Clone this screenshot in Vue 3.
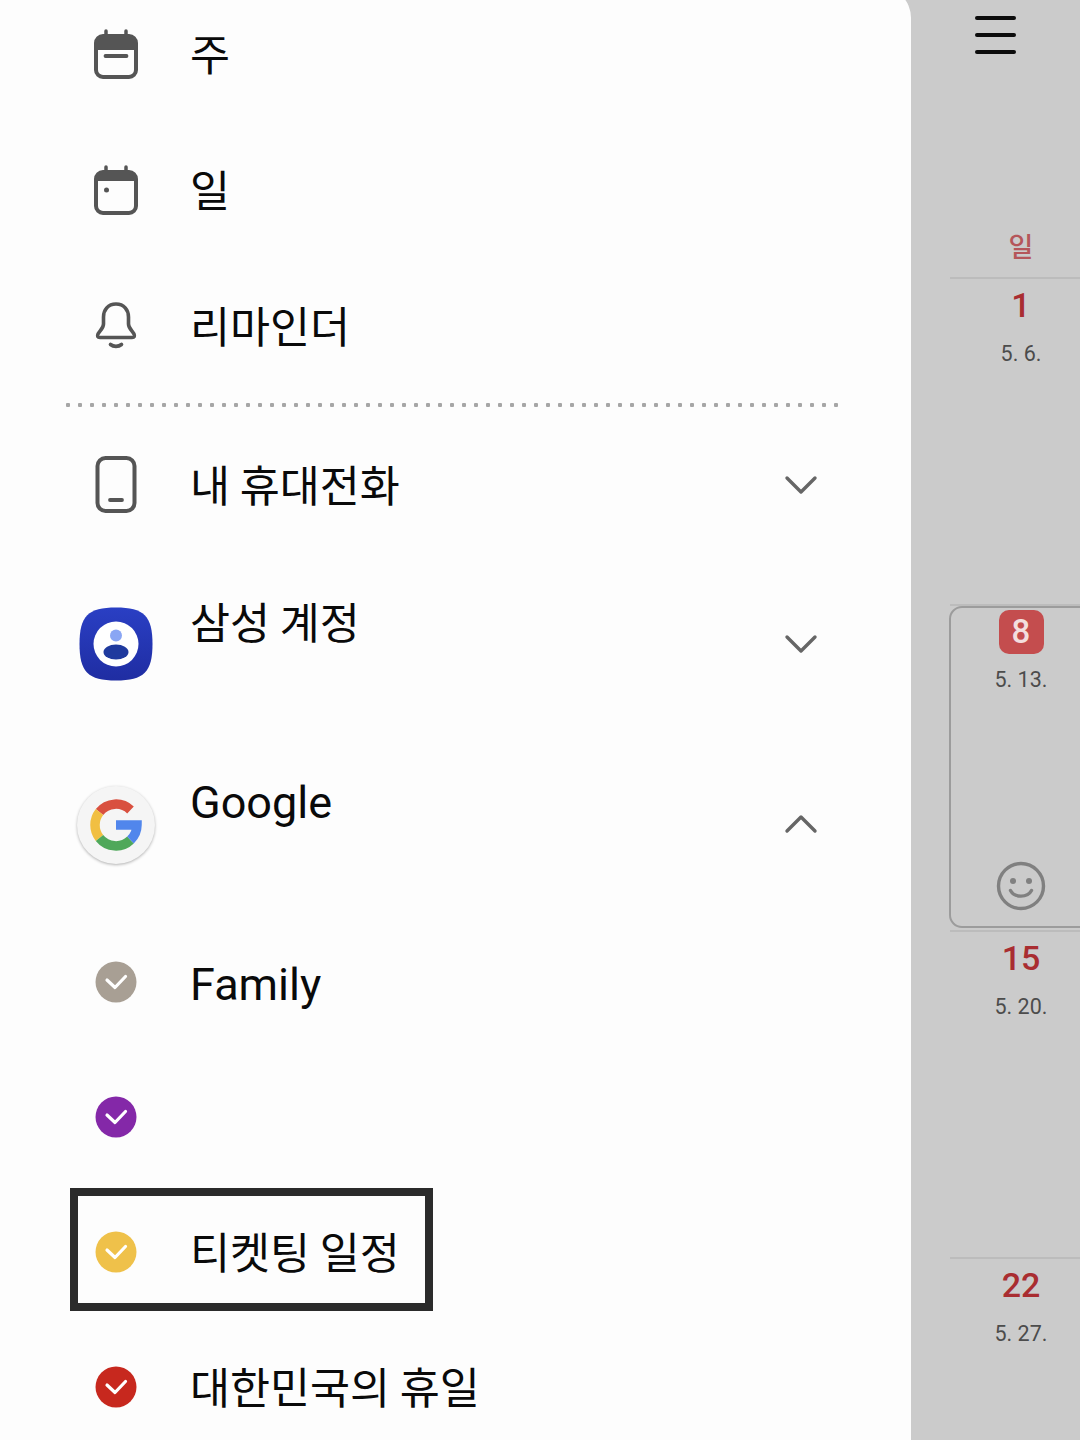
<script setup>
const checks = [
  { label: 'Family', color: '#a89f94', cls: 'family' },
  { label: '', color: '#8428a8' },
  { label: '티켓팅 일정', color: '#efc14a', boxed: true },
  { label: '대한민국의 휴일', color: '#c7281e' },
]

const weeks = [
  { day: '1', date: '5. 6.' },
  { day: '8', date: '5. 13.', today: true },
  { day: '15', date: '5. 20.' },
  { day: '22', date: '5. 27.' },
]
</script>

<template>
  <div class="screen">
    <aside class="drawer">
      <div class="row">
        <svg class="icon" width="48" height="50" viewBox="0 0 48 50">
          <path d="M14 2v8M34 2v8" stroke="#555" stroke-width="3.5" stroke-linecap="round" />
          <path d="M4 12a6 6 0 0 1 6-6h28a6 6 0 0 1 6 6v9H4z" fill="#555" />
          <rect x="4" y="7" width="40" height="41" rx="7" fill="none" stroke="#555" stroke-width="4" />
          <path d="M13.5 27h21" stroke="#555" stroke-width="3.8" stroke-linecap="round" />
        </svg>
        <span class="label">주</span>
      </div>
      <div class="row">
        <svg class="icon" width="48" height="50" viewBox="0 0 48 50">
          <path d="M14 2v8M34 2v8" stroke="#555" stroke-width="3.5" stroke-linecap="round" />
          <path d="M4 12a6 6 0 0 1 6-6h28a6 6 0 0 1 6 6v4H4z" fill="#555" />
          <rect x="4" y="7" width="40" height="41" rx="7" fill="none" stroke="#555" stroke-width="4" />
          <circle cx="14.5" cy="25" r="2.5" fill="#555" />
        </svg>
        <span class="label">일</span>
      </div>
      <div class="row">
        <svg class="icon" width="48" height="50" viewBox="0 0 48 50">
          <path d="M24 3c-8 0-12.500 6-12.500 13v7c0 4-3 6-5.500 10-1 2-.5 3.500 2 3.500h32c2.500 0 3-1.500 2-3.500-2.500-4-5.500-6-5.500-10v-7c0-7-4.500-13-12.500-13z" fill="none" stroke="#555" stroke-width="3.6" stroke-linejoin="round" />
          <path d="M18.500 43.500c3 2.500 8 2.500 11 0" fill="none" stroke="#555" stroke-width="3.6" stroke-linecap="round" />
        </svg>
        <span class="label">리마인더</span>
      </div>

      <div class="dots"></div>

      <div class="row">
        <svg class="icon" width="48" height="58" viewBox="0 0 48 58">
          <rect x="5.5" y="2" width="37" height="53" rx="8" fill="none" stroke="#555" stroke-width="4" />
          <path d="M18 44h12" stroke="#555" stroke-width="3.8" stroke-linecap="round" />
        </svg>
        <span class="label">내 휴대전화</span>
        <svg class="chevron" width="34" height="20" viewBox="0 0 34 20"><path d="M3 3l14 14 14-14" /></svg>
      </div>

      <div class="row account">
        <svg class="icon" width="74" height="74" viewBox="0 0 74 74">
          <defs>
            <linearGradient id="samsung" x1="0" y1="0" x2="0" y2="1">
              <stop offset="0" stop-color="#2a3fc4" />
              <stop offset="1" stop-color="#1f2da2" />
            </linearGradient>
          </defs>
          <path d="M37 .5C65 .5 73.500 9 73.500 37S65 73.500 37 73.500 .5 65 .5 37 9 .5 37 .5z" fill="url(#samsung)" />
          <circle cx="37" cy="37" r="22.5" fill="#fff" />
          <circle cx="37" cy="28.5" r="6" fill="#8aa6f4" />
          <ellipse cx="37" cy="45" rx="12.5" ry="7.5" fill="#1f3a9e" />
        </svg>
        <span class="label lifted">삼성 계정</span>
        <svg class="chevron" width="34" height="20" viewBox="0 0 34 20"><path d="M3 3l14 14 14-14" /></svg>
      </div>

      <div class="row google">
        <span class="google-badge">
          <svg width="56" height="56" viewBox="0 0 56 56" fill="none" stroke-width="9.5">
            <path d="M42.500 13A21 21 0 0 0 11.500 15" stroke="#d9503f" />
            <path d="M11.500 15A21 21 0 0 0 11.500 41" stroke="#f1bf42" />
            <path d="M11.500 41A21 21 0 0 0 42.500 43" stroke="#4fa85a" />
            <path d="M28 28H49A21 21 0 0 1 42.500 43" stroke="#5186ec" />
          </svg>
        </span>
        <span class="label latin lifted-latin">Google</span>
        <svg class="chevron" width="34" height="20" viewBox="0 0 34 20"><path d="M3 17L17 3l14 14" /></svg>
      </div>

      <div v-for="item in checks" :key="item.color" class="row check-row" :class="item.cls">
        <span class="check" :style="{ background: item.color }">
          <svg width="24" height="18" viewBox="0 0 24 18"><path d="M2.500 7.500l8 7.500L21 4" /></svg>
        </span>
        <span class="label" :class="{ latin: item.label === 'Family' }">{{ item.label }}</span>
        <div v-if="item.boxed" class="highlight"></div>
      </div>
    </aside>

    <main class="calendar">
      <div class="topbar">
        <div class="menu"><i></i><i></i><i></i></div>
      </div>
      <div class="weekday">일</div>
      <div v-for="week in weeks" :key="week.day" class="week">
        <div v-if="week.today" class="today">
          <span class="badge">{{ week.day }}</span>
          <span class="date">{{ week.date }}</span>
          <svg class="smile" width="50" height="50" viewBox="0 0 50 50">
            <circle cx="25" cy="25" r="22.5" fill="none" stroke="#808080" stroke-width="3.4" />
            <circle cx="17" cy="20" r="3" fill="#808080" />
            <circle cx="33" cy="20" r="3" fill="#808080" />
            <path d="M14.500 29.500c4 7.500 17 7.500 21 0" fill="none" stroke="#808080" stroke-width="3.4" stroke-linecap="round" />
          </svg>
        </div>
        <template v-else>
          <span class="day">{{ week.day }}</span>
          <span class="date">{{ week.date }}</span>
        </template>
      </div>
    </main>
  </div>
</template>

<style scoped>
.screen {
  display: flex;
  width: 1080px;
  height: 1440px;
  overflow: hidden;
  background: #cbcbcb;
  font-family: "Noto Sans CJK KR", "Roboto", sans-serif;
}

.drawer {
  flex: none;
  width: 911px;
  height: 1480px;
  margin-top: -14px;
  background: #fdfdfd;
  border-top-right-radius: 32px;
}

.row {
  position: relative;
  display: flex;
  align-items: center;
  height: 136px;
  padding-left: 190px;
}

.icon,
.google-badge,
.check {
  position: absolute;
  left: 116px;
  top: 50%;
  transform: translate(-50%, -50%);
}

.label {
  position: relative;
  top: -1px;
  font-size: 43.5px;
  line-height: 56px;
  color: #0a0a0a;
}

.latin {
  top: 1px;
  font-family: "Roboto", sans-serif;
  font-size: 45px;
}

.lifted {
  top: -23px;
}

.lifted-latin {
  top: -21px;
}

.chevron {
  position: absolute;
  left: 784px;
  top: 50%;
  transform: translateY(-50%);
  fill: none;
  stroke: #666;
  stroke-width: 3.4;
  stroke-linecap: round;
  stroke-linejoin: round;
}

.dots {
  height: 4px;
  margin: 9px 69px 10px 62px;
  background-image: radial-gradient(circle, #a6a6a6 2px, transparent 2.5px);
  background-size: 12px 4px;
}

.account {
  height: 181px;
}

.google {
  height: 180px;
}

.google-badge {
  display: flex;
  align-items: center;
  justify-content: center;
  width: 78px;
  height: 78px;
  margin-top: 1px;
  border-radius: 50%;
  background: #f5f5f5;
  box-shadow: 0 1px 3px rgba(0, 0, 0, 0.3);
}

.check-row {
  height: 135px;
}

.family {
  height: 131px;
  margin-top: 4px;
}

.family .check {
  margin-top: -2px;
}

.check {
  display: flex;
  align-items: center;
  justify-content: center;
  width: 41px;
  height: 41px;
  border-radius: 50%;
}

.check svg {
  fill: none;
  stroke: #fff;
  stroke-width: 3.2;
  stroke-linecap: round;
  stroke-linejoin: round;
}

.highlight {
  position: absolute;
  left: 70px;
  top: 4px;
  width: 363px;
  height: 123px;
  box-sizing: border-box;
  border: 8px solid #2b2b2b;
}

.calendar {
  flex: 1;
  display: flex;
  flex-direction: column;
  min-width: 0;
  padding-left: 39px;
}

.topbar {
  flex: none;
  height: 222px;
  margin-left: -39px;
}

.menu {
  display: flex;
  flex-direction: column;
  gap: 13.5px;
  width: 41px;
  margin: 16px 0 0 64px;
}

.menu i {
  display: block;
  height: 3.5px;
  border-radius: 2px;
  background: #0c0c0c;
}

.weekday {
  flex: none;
  height: 55px;
  padding-left: 12px;
  line-height: 47px;
  text-align: center;
  font-size: 27px;
  font-weight: 500;
  color: #b5565a;
}

.week {
  flex: none;
  display: flex;
  flex-direction: column;
  align-items: center;
  height: 321.5px;
  padding: 3px 0 0 12px;
  border-top: 2px solid #bcbcbc;
}

.day {
  font-family: "Roboto", sans-serif;
  font-size: 34px;
  font-weight: 500;
  line-height: 46px;
  color: #a92d31;
}

.date {
  margin-top: 11px;
  font-family: "Roboto", sans-serif;
  font-size: 21.5px;
  line-height: 30px;
  color: #4c4c4c;
}

.today {
  display: flex;
  flex-direction: column;
  align-items: center;
  align-self: stretch;
  box-sizing: border-box;
  height: 322px;
  margin: -3px -13px 0 -13px;
  padding-top: 2px;
  border: 2px solid #9c9c9c;
  border-radius: 13px;
}

.badge {
  display: flex;
  align-items: center;
  justify-content: center;
  width: 45px;
  height: 44px;
  border-radius: 10px;
  background: #c44d4e;
  font-family: "Roboto", sans-serif;
  font-size: 33px;
  font-weight: 500;
  color: #f3dede;
}

.today .date {
  margin-top: 11px;
}

.smile {
  margin-top: auto;
  margin-bottom: 15px;
}
</style>

<style>
body {
  background: #cbcbcb;
}
</style>
